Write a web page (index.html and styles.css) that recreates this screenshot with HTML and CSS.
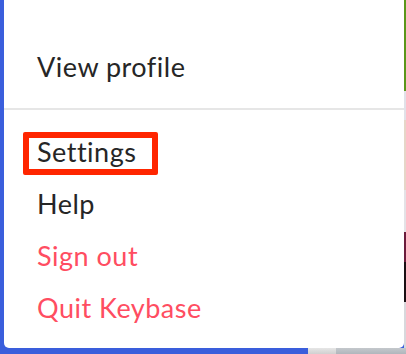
FILE: index.html
```html
<!DOCTYPE html>
<html>
<head>
<meta charset="utf-8">
<link rel="stylesheet" href="styles.css">
</head>
<body>
<div class="screen">
  <div class="left-strip"></div>
  <div class="menu">
    <div class="section top">
      <div class="item">View profile</div>
    </div>
    <div class="divider"></div>
    <div class="section">
      <div class="item highlighted">Settings</div>
      <div class="item">Help</div>
      <div class="item danger">Sign out</div>
      <div class="item danger">Quit Keybase</div>
    </div>
  </div>
  <div class="right-strip">
    <div class="seg green"></div>
    <div class="seg grey1"></div>
    <div class="seg beige"></div>
    <div class="seg grey2"></div>
    <div class="seg maroon"></div>
    <div class="seg black"></div>
    <div class="seg grey3"></div>
  </div>
  <div class="bottom-strip">
    <div class="bblue"></div>
    <div class="bgrey"></div>
    <div class="bslate"></div>
  </div>
</div>
</body>
</html>
```
FILE: styles.css
```css
html, body {
  margin: 0;
  padding: 0;
  background: #ffffff;
}
.screen {
  width: 406px;
  height: 354px;
  display: grid;
  grid-template-columns: 4px 400px 2px;
  grid-template-rows: 348px 6px;
  overflow: hidden;
  background: #3a5edc;
}
.left-strip {
  grid-column: 1;
  grid-row: 1 / 3;
  background: #3a5edc;
}
.menu {
  grid-column: 2;
  grid-row: 1;
  background: #ffffff;
  border-radius: 0 0 5px 5px;
  font-family: "Lato", "Open Sans", sans-serif;
  font-size: 27px;
  letter-spacing: 0.5px;
  color: #262626;
  display: flex;
  flex-direction: column;
  position: relative;
  z-index: 1;
}
.section {
  display: flex;
  flex-direction: column;
  padding: 16px 0 14px;
}
.section.top {
  padding: 41px 0 15px;
}
.item {
  line-height: 52px;
  padding-left: 33px;
  white-space: nowrap;
}
.item.danger {
  color: #ff4d61;
}
.item.highlighted {
  position: relative;
}
.item.highlighted::after {
  content: "";
  position: absolute;
  left: 19px;
  top: 6px;
  width: 123px;
  height: 31px;
  border: 6px solid #ff2600;
  border-radius: 2px;
}
.divider {
  height: 2px;
  background: #e6e6e6;
}
.right-strip {
  grid-column: 3;
  grid-row: 1;
  display: flex;
  flex-direction: column;
  background: #e2e2e8;
}
.seg.green { height: 91px; background: #5a9619; }
.seg.grey1 { height: 29px; background: #e1e1e8; }
.seg.beige { height: 70px; background: #e6d6c8; }
.seg.grey2 { height: 42px; background: #e4e2e6; }
.seg.maroon { height: 30px; background: #6b1c3c; }
.seg.black { height: 40px; background: #1a1014; }
.seg.grey3 { flex: 1; background: #d8d8dc; }
.bottom-strip {
  grid-column: 2 / 4;
  grid-row: 2;
  display: flex;
}
.bblue { width: 304px; background: #3a5edc; }
.bgrey { width: 28px; background: linear-gradient(#e6e6e6, #d0d0d0); }
.bslate { flex: 1; background: linear-gradient(#c4c8cc, #b0b6bc); }
```
